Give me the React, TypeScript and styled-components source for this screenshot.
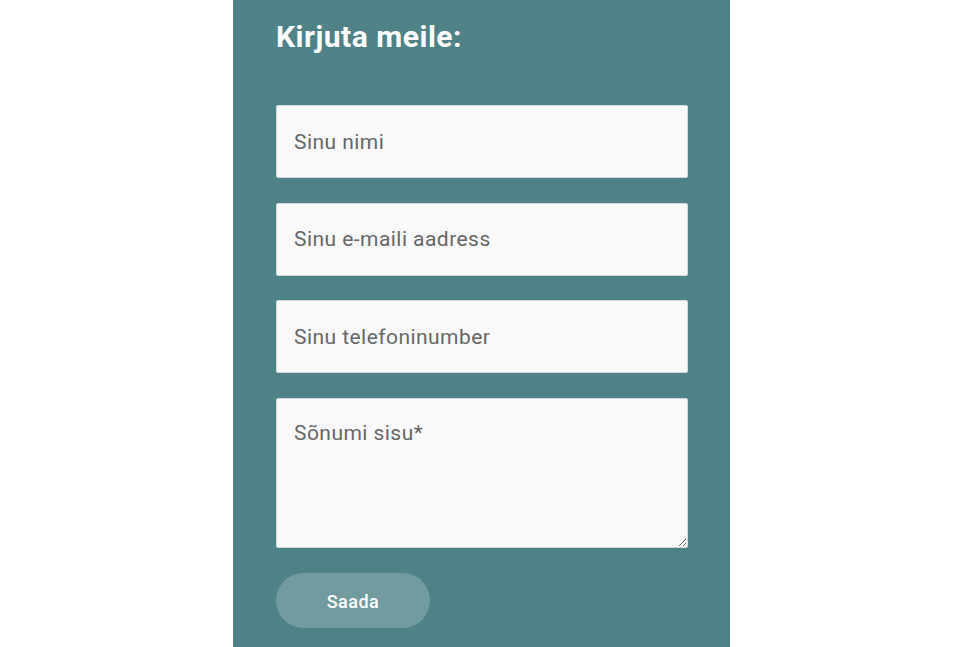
import React from 'react'
import styled, { createGlobalStyle } from 'styled-components'

const GlobalStyle = createGlobalStyle`
  html, body {
    margin: 0;
    padding: 0;
    background: #fff;
  }
  body {
    font-family: Roboto, 'Liberation Sans', sans-serif;
  }
`

const fields = [
  { name: 'name', placeholder: 'Sinu nimi' },
  { name: 'email', placeholder: 'Sinu e-maili aadress' },
  { name: 'phone', placeholder: 'Sinu telefoninumber' },
]

export default function App() {
  return (
    <>
      <GlobalStyle />
      <Page>
        <Panel>
          <Heading>Kirjuta meile:</Heading>
          <Form onSubmit={(evt) => evt.preventDefault()}>
            {fields.map((field) => (
              <Field key={field.name} name={field.name} placeholder={field.placeholder} />
            ))}
            <Message name="message" placeholder="Sõnumi sisu*" />
            <SendButton type="submit">Saada</SendButton>
          </Form>
        </Panel>
      </Page>
    </>
  )
}

const Page = styled.div`
  display: flex;
  justify-content: center;
  height: 647px;
  overflow: hidden;
`

const Panel = styled.section`
  width: 497px;
  box-sizing: border-box;
  padding: 20px 42px 0 43px;
  background: #4e8287;
  margin-left: -1px;
`

const Heading = styled.h2`
  margin: 0 0 51px;
  color: #fff;
  font-size: 30px;
  line-height: 34px;
  font-weight: 700;
  letter-spacing: 0.5px;
`

const Form = styled.form`
  display: flex;
  flex-direction: column;
  align-items: flex-start;
  gap: 24.5px;
`

const inputBase = `
  width: 100%;
  box-sizing: border-box;
  border: 1px solid #d6dcdc;
  border-radius: 2px;
  background: #f9f9f9;
  color: #444;
  font-family: Roboto, 'Liberation Sans', sans-serif;
  font-size: 21px;
  letter-spacing: 0.45px;
  padding: 0 17px;
  outline: none;

  &::placeholder {
    color: #676767;
    opacity: 1;
  }
`

const Field = styled.input`
  ${inputBase}
  height: 73px;
`

const Message = styled.textarea`
  ${inputBase}
  height: 150px;
  padding-top: 22px;
  line-height: 25px;
  resize: vertical;
`

const SendButton = styled.button`
  width: 154px;
  height: 55px;
  margin-top: 0.5px;
  border: none;
  border-radius: 28px;
  background: rgba(255, 255, 255, 0.2);
  color: #fff;
  font-family: Roboto, 'Liberation Sans', sans-serif;
  font-size: 18px;
  font-weight: 500;
  letter-spacing: 0.5px;
  padding-top: 4px;
  cursor: pointer;
`
